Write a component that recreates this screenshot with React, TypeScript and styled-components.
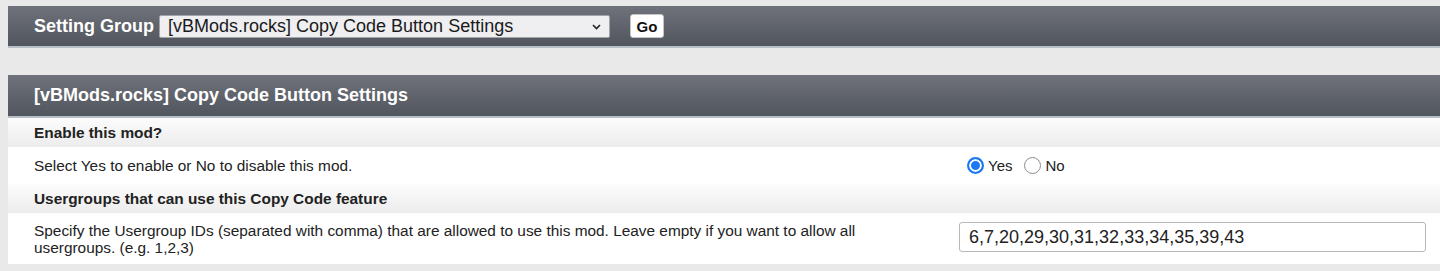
import styled, { createGlobalStyle } from 'styled-components'

const GlobalStyle = createGlobalStyle`
  body {
    margin: 6px 0 0 8px;
    background: #e9e9e9;
    font-family: 'Liberation Sans', Arial, sans-serif;
    color: #222;
  }
`

const Bar = styled.div`
  display: flex;
  align-items: center;
  height: 40px;
  padding-left: 26px;
  background: linear-gradient(to bottom, #6f727a, #51555d);
  border-bottom: 2px solid #b6bec8;
`

const BarLabel = styled.span`
  color: #fff;
  font-size: 18px;
  font-weight: bold;
  margin-right: 5px;
`

const SelectWrap = styled.div`
  position: relative;
  width: 451px;
  height: 23px;
`

const GroupSelect = styled.select`
  appearance: none;
  width: 100%;
  height: 100%;
  box-sizing: border-box;
  padding: 0 24px 0 8px;
  background: #efeff2;
  border: 1px solid #a3a3a8;
  border-radius: 2px;
  font-family: 'Liberation Sans', Arial, sans-serif;
  font-size: 18px;
  color: #1a1a1a;
`

const Chevron = styled.svg`
  position: absolute;
  right: 9px;
  top: 9px;
  pointer-events: none;
`

const GoButton = styled.button`
  margin-left: 20px;
  height: 24px;
  width: 34px;
  padding: 0;
  background: #fff;
  border: 1px solid #c4c4c4;
  border-radius: 3px;
  font-family: 'Liberation Sans', Arial, sans-serif;
  font-size: 15px;
  font-weight: bold;
  color: #111;
`

const Panel = styled.div`
  margin-top: 27px;
`

const PanelHeader = styled.div`
  display: flex;
  align-items: center;
  height: 41px;
  padding-left: 26px;
  background: linear-gradient(to bottom, #6f727a, #51555d);
  border-bottom: 2px solid #b6bec8;
  color: #fff;
  font-size: 18px;
  font-weight: bold;
`

const SectionTitle = styled.div`
  display: flex;
  align-items: center;
  height: 29px;
  padding-left: 26px;
  background: linear-gradient(to bottom, #fcfcfc, #ececec);
  font-size: 15.4px;
  font-weight: bold;
  color: #222;
`

const OptionRow = styled.div<{ $height: number }>`
  display: grid;
  grid-template-columns: 951px 1fr;
  align-items: center;
  min-height: ${({ $height }) => $height}px;
  background: #fff;
  font-size: 15.4px;
  line-height: 17px;
`

const Description = styled.div`
  padding: 0 30px 0 26px;
`

const Control = styled.div`
  display: flex;
  align-items: center;
  padding-right: 14px;
`

const RadioLabel = styled.label<{ $first?: boolean }>`
  display: flex;
  align-items: center;
  margin-left: ${({ $first }) => ($first ? '8px' : '0')};
  margin-right: 12px;
  font-size: 15px;
  color: #222;
`

const Radio = styled.input`
  appearance: none;
  width: 17px;
  height: 17px;
  margin: 0 4px 0 0;
  border-radius: 50%;
  border: 1px solid #8d8d8d;
  background: #fff;
  box-sizing: border-box;

  &:checked {
    border: 2px solid #1c79f2;
    background: #1c79f2;
    box-shadow: inset 0 0 0 2px #fff;
  }
`

const TextInput = styled.input`
  width: 100%;
  height: 30px;
  margin-bottom: 3px;
  box-sizing: border-box;
  padding: 0 9px;
  border: 1px solid #b8b8b8;
  border-radius: 3px;
  font-family: 'Liberation Sans', Arial, sans-serif;
  font-size: 18px;
  color: #222;
`

const App = () => {
  return (
    <>
      <GlobalStyle />
      <Bar>
        <BarLabel>Setting Group</BarLabel>
        <SelectWrap>
          <GroupSelect defaultValue="copycode">
            <option value="copycode">[vBMods.rocks] Copy Code Button Settings</option>
          </GroupSelect>
          <Chevron width="9" height="6" viewBox="0 0 9 6">
            <path d="M1 1l3.5 3.5L8 1" fill="none" stroke="#222" strokeWidth="1.6" />
          </Chevron>
        </SelectWrap>
        <GoButton>Go</GoButton>
      </Bar>

      <Panel>
        <PanelHeader>[vBMods.rocks] Copy Code Button Settings</PanelHeader>
        <SectionTitle>Enable this mod?</SectionTitle>
        <OptionRow $height={37}>
          <Description>Select Yes to enable or No to disable this mod.</Description>
          <Control>
            <RadioLabel $first>
              <Radio type="radio" name="enable" defaultChecked />
              Yes
            </RadioLabel>
            <RadioLabel>
              <Radio type="radio" name="enable" />
              No
            </RadioLabel>
          </Control>
        </OptionRow>
        <SectionTitle>Usergroups that can use this Copy Code feature</SectionTitle>
        <OptionRow $height={51}>
          <Description>
            Specify the Usergroup IDs (separated with comma) that are allowed to use this mod. Leave
            empty if you want to allow all usergroups. (e.g. 1,2,3)
          </Description>
          <Control>
            <TextInput defaultValue="6,7,20,29,30,31,32,33,34,35,39,43" />
          </Control>
        </OptionRow>
      </Panel>
    </>
  )
}

export default App
